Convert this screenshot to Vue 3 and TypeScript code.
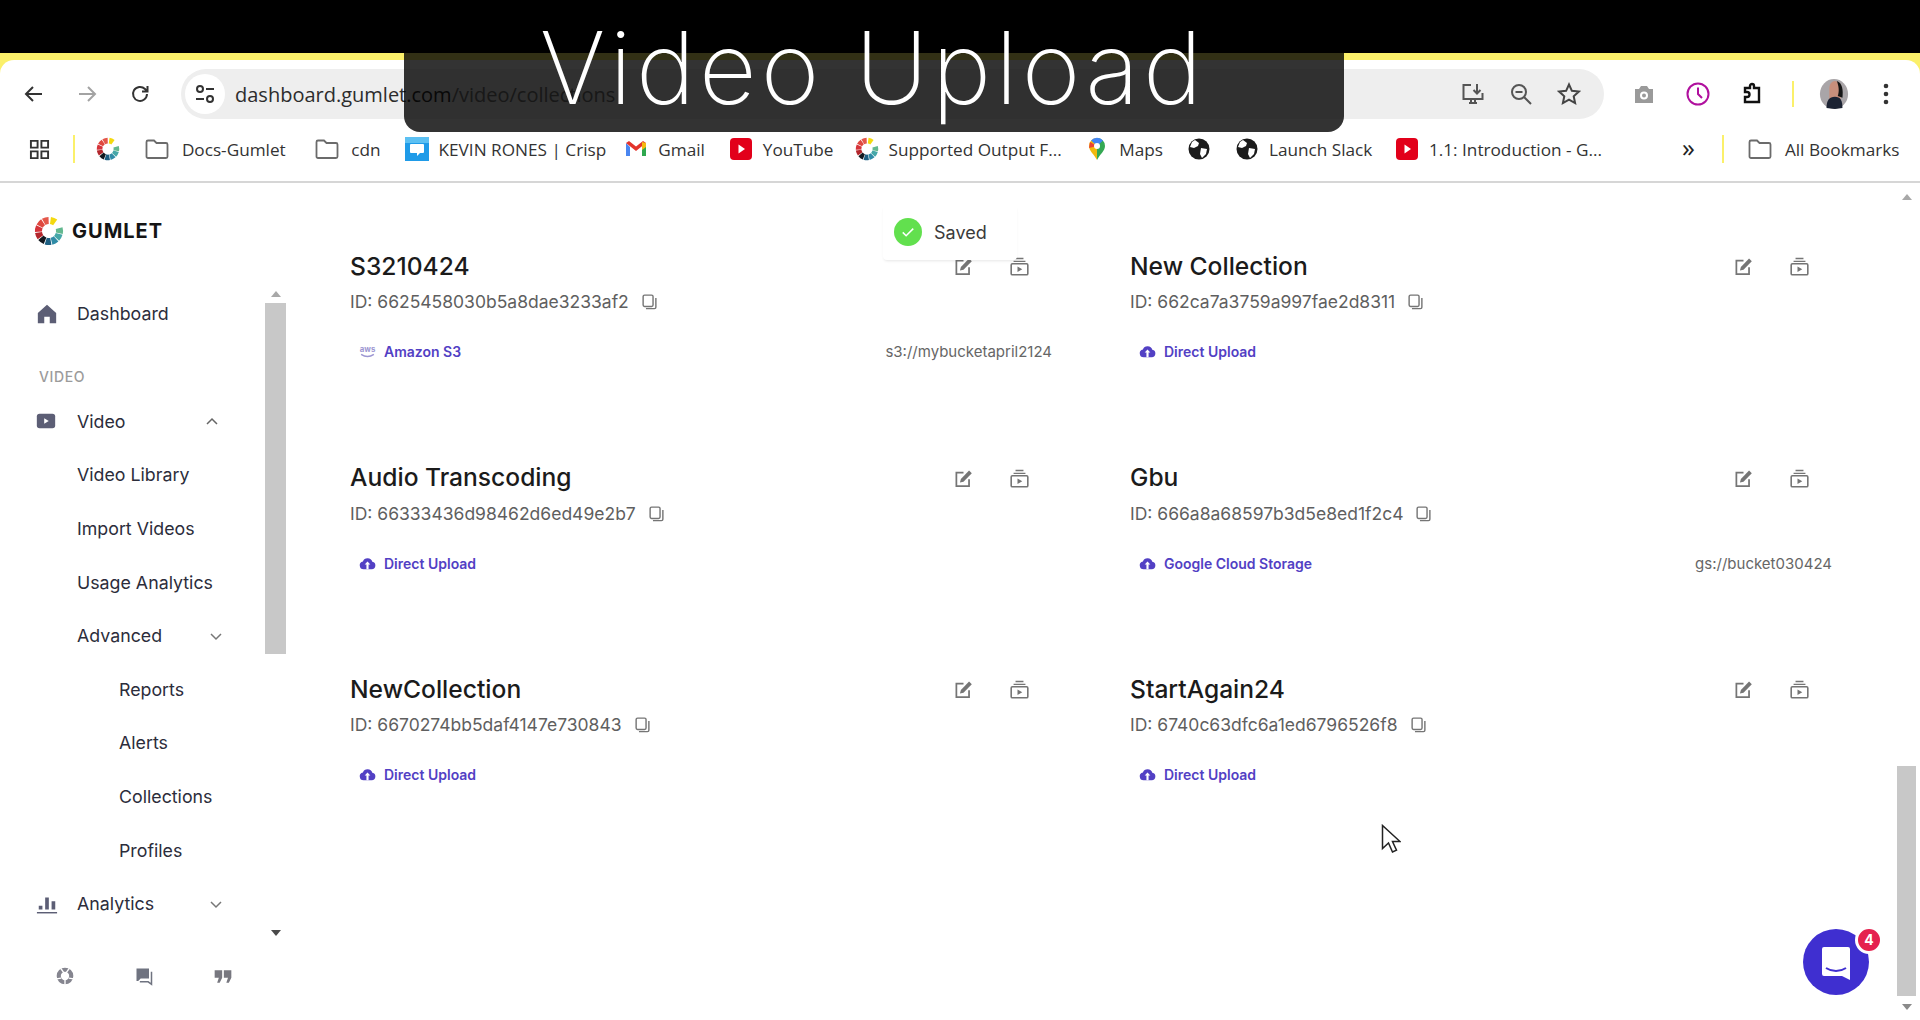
<script setup lang="ts">
interface Bookmark { label: string; icon: string; cls: string }
interface Card { name: string; id: string; source: string; icon: string; bucket?: string }

const segColors = ['#f4d90f', '#63b88f', '#45a7a8', '#2f8ba6', '#1d5f82', '#12181f', '#b3262c', '#d5333a', '#e0483f', '#e4574a']
function arc(i: number): string {
  const step = 32
  const a0 = ((8 + i * step + (i > 0 ? 34 : 0)) * Math.PI) / 180
  const a1 = a0 + ((step - 4) * Math.PI) / 180
  const p = (r: number, a: number) => `${(16 + r * Math.sin(a)).toFixed(2)} ${(16 - r * Math.cos(a)).toFixed(2)}`
  return `M${p(15, a0)} A15 15 0 0 1 ${p(15, a1)} L${p(7.5, a1)} A7.5 7.5 0 0 0 ${p(7.5, a0)} Z`
}
const logoSegments = segColors.map((color, i) => ({ color, d: arc(i) }))

const bookmarks: Bookmark[] = [
  { label: 'Docs-Gumlet', icon: 'folder', cls: 'b-docs' },
  { label: 'cdn', icon: 'folder', cls: 'b-cdn' },
  { label: 'KEVIN RONES | Crisp', icon: 'crisp', cls: 'b-crisp' },
  { label: 'Gmail', icon: 'gmail', cls: 'b-gmail' },
  { label: 'YouTube', icon: 'yt', cls: 'b-yt' },
  { label: 'Supported Output F...', icon: 'gumlet', cls: 'b-sup' },
  { label: 'Maps', icon: 'maps', cls: 'b-maps' },
  { label: '', icon: 'globe', cls: 'b-globe' },
  { label: 'Launch Slack', icon: 'globe', cls: 'b-slack' },
  { label: '1.1: Introduction - G...', icon: 'yt', cls: 'b-intro' },
]

const cards: Card[] = [
  { name: 'S3210424', id: '6625458030b5a8dae3233af2', source: 'Amazon S3', icon: 'aws', bucket: 's3://mybucketapril2124' },
  { name: 'New Collection', id: '662ca7a3759a997fae2d8311', source: 'Direct Upload', icon: 'cloud' },
  { name: 'Audio Transcoding', id: '66333436d98462d6ed49e2b7', source: 'Direct Upload', icon: 'cloud' },
  { name: 'Gbu', id: '666a8a68597b3d5e8ed1f2c4', source: 'Google Cloud Storage', icon: 'cloud', bucket: 'gs://bucket030424' },
  { name: 'NewCollection', id: '6670274bb5daf4147e730843', source: 'Direct Upload', icon: 'cloud' },
  { name: 'StartAgain24', id: '6740c63dfc6a1ed6796526f8', source: 'Direct Upload', icon: 'cloud' },
]
</script>

<template>
  <div class="page">
    <svg class="defs" aria-hidden="true">
      <symbol id="i-gumlet" viewBox="0 0 32 32">
        <path v-for="s in logoSegments" :key="s.d" :d="s.d" :fill="s.color" />
      </symbol>
      <symbol id="i-folder" viewBox="0 0 24 24">
        <path d="M1.500 5a1.500 1.500 0 0 1 1.500-1.500h6l2.500 2.500h9.500A1.500 1.500 0 0 1 22.500 7.500v12a1.500 1.500 0 0 1-1.500 1.500H3a1.500 1.500 0 0 1-1.500-1.500z" fill="none" stroke="#6b6b6b" stroke-width="1.800" />
      </symbol>
      <symbol id="i-crisp" viewBox="0 0 24 24">
        <rect width="24" height="24" fill="#1f9be8" />
        <rect y="0" width="24" height="6" fill="#5cc0f2" />
        <path d="M6 7h12a1 1 0 0 1 1 1v7a1 1 0 0 1-1 1h-3l-3 3v-3H6a1 1 0 0 1-1-1V8a1 1 0 0 1 1-1z" fill="#fff" />
      </symbol>
      <symbol id="i-gmail" viewBox="0 0 24 24">
        <path d="M2 6v13h4V10z" fill="#4a86f0" />
        <path d="M22 6v13h-4V10z" fill="#2fa84f" />
        <path d="M2 6l10 8 10-8-3-2-7 5.500L5 4z" fill="#e3342b" />
        <path d="M18 5l4 1v4l-4 3z" fill="#f5b90f" />
      </symbol>
      <symbol id="i-yt" viewBox="0 0 24 24">
        <rect x="1" y="1" width="22" height="22" rx="4" fill="#e2001a" />
        <path d="M9.500 7.500v9l6.500-4.500z" fill="#fff" />
      </symbol>
      <symbol id="i-maps" viewBox="0 0 24 24">
        <path d="M12 1a8 8 0 0 0-8 8c0 5 5 8 8 14z" fill="#f2b90c" />
        <path d="M12 1a8 8 0 0 1 8 8c0 5-5 8-8 14z" fill="#34a853" />
        <path d="M6 3.500A8 8 0 0 1 18 3.500L12 9z" fill="#4285f4" />
        <path d="M5 5l7 4-8 2z" fill="#ea4335" />
        <circle cx="12" cy="9" r="3" fill="#fff" />
      </symbol>
      <symbol id="i-globe" viewBox="0 0 24 24">
        <circle cx="12" cy="12" r="10.500" fill="#1b1b1b" />
        <path d="M8 3l4 3-1 3-4 2-4-1 2-5zM14 11l6 1-1 5-4 4-2-4z" fill="#fff" />
      </symbol>
      <symbol id="i-edit" viewBox="0 0 24 24">
        <path d="M19 13v8.500H3V4.500H12" fill="none" stroke="#757575" stroke-width="2.200" />
        <path d="M7.500 17l1.200-4.500L19 2l3.500 3.500L12 16z" fill="#757575" />
      </symbol>
      <symbol id="i-coll" viewBox="0 0 24 24">
        <path d="M7 2h10M4.500 5.500h15" fill="none" stroke="#757575" stroke-width="1.800" />
        <rect x="1.500" y="8.500" width="21" height="14" rx="1.500" fill="none" stroke="#757575" stroke-width="2" />
        <path d="M9.500 12v7l6-3.500z" fill="#757575" />
      </symbol>
      <symbol id="i-copy" viewBox="0 0 24 24">
        <rect x="3" y="3" width="14" height="16" rx="2" fill="none" stroke="#757575" stroke-width="2" />
        <path d="M21 7v13a2 2 0 0 1-2 2H7" fill="none" stroke="#757575" stroke-width="2" />
      </symbol>
      <symbol id="i-cloud" viewBox="0 0 24 24">
        <path d="M6.500 20a5.500 5.500 0 0 1-1-10.900 7 7 0 0 1 13.300 0.400A5.300 5.300 0 0 1 18 20z" fill="#5240c4" />
        <path d="M12 9l4 4.500h-2.500V20h-3v-6.500H8z" fill="#fff" />
      </symbol>
    </svg>

    <header class="chrome">
      <div class="topbar"></div>
      <div class="frame">
        <div class="frame-inner">
          <div class="toolbar">
            <div class="nav-icons">
              <svg class="tb-icon" viewBox="0 0 24 24"><path d="M20 12H5M11 5l-7 7 7 7" fill="none" stroke="#333" stroke-width="2" /></svg>
              <svg class="tb-icon" viewBox="0 0 24 24"><path d="M4 12h15M13 5l7 7-7 7" fill="none" stroke="#a3a3a3" stroke-width="2" /></svg>
              <svg class="tb-icon" viewBox="0 0 24 24"><path d="M19 12a7 7 0 1 1-2-5l2 2M19.500 4v5.500H14" fill="none" stroke="#333" stroke-width="2" /></svg>
            </div>
            <div class="omnibox">
              <span class="tune">
                <svg viewBox="0 0 24 24" width="24" height="24"><circle cx="7" cy="7" r="3" fill="none" stroke="#333" stroke-width="2" /><path d="M13 7h8M3 17h8" stroke="#333" stroke-width="2" /><circle cx="17" cy="17" r="3" fill="none" stroke="#333" stroke-width="2" /></svg>
              </span>
              <span class="url">dashboard.gumlet.com<span class="url-path">/video/collections</span></span>
              <span class="omni-right">
                <svg class="tb-icon" viewBox="0 0 24 24"><path d="M10 3H2.500v14h19v-6M16 2v9M12.500 8l3.500 3.500L19.500 8M8 21h8M10 17v4M14 17v4" fill="none" stroke="#555" stroke-width="2" /></svg>
                <svg class="tb-icon" viewBox="0 0 24 24"><circle cx="10" cy="10" r="7" fill="none" stroke="#555" stroke-width="2" /><path d="M15 15l7 7M6.500 10h7" stroke="#555" stroke-width="2" /></svg>
                <svg class="tb-icon" viewBox="0 0 24 24"><path d="M12 2.500l2.900 6.300 6.900.8-5.100 4.700 1.400 6.800L12 17.700l-6.100 3.400 1.400-6.800L2.200 9.600l6.900-.8z" fill="none" stroke="#444" stroke-width="2" /></svg>
              </span>
            </div>
            <div class="ext-icons">
              <svg class="tb-icon" viewBox="0 0 24 24"><path d="M3 7h4l2-3h6l2 3h4v14H3z" fill="#9a9a9a" /><circle cx="12" cy="13.500" r="4" fill="#fff" /><circle cx="12" cy="13.500" r="2" fill="#9a9a9a" /></svg>
              <svg class="tb-icon" viewBox="0 0 24 24"><circle cx="12" cy="12" r="10.500" fill="none" stroke="#b0109e" stroke-width="2" /><path d="M12 5.500V12l4 4" fill="none" stroke="#b0109e" stroke-width="2" /></svg>
              <svg class="tb-icon" viewBox="0 0 24 24"><path d="M5 6h5V4a2 2 0 0 1 4 0v2h5v14H5v-5h2a2.500 2.500 0 0 0 0-5H5z" fill="none" stroke="#111" stroke-width="2.400" /></svg>
              <span class="sep"></span>
              <svg class="avatar" viewBox="0 0 32 32"><ellipse cx="16" cy="16" rx="15" ry="16" fill="#a9a5a8" /><path d="M11 24V10c0-5 3-8 6-8s6 3 6 8v14z" fill="#c88f7c" /><path d="M8 31c0-8 3-12 9-12s8 4 8 12l-8 1z" fill="#1c2333" /><path d="M19 2c6 2 7 10 6 18l-5-2c2-5 1-11-1-16z" fill="#151515" /></svg>
              <svg class="dots" viewBox="0 0 6 24"><circle cx="3" cy="4" r="2.300" fill="#333" /><circle cx="3" cy="12" r="2.300" fill="#333" /><circle cx="3" cy="20" r="2.300" fill="#333" /></svg>
            </div>
          </div>
          <div class="bookmarks">
            <svg class="apps" viewBox="0 0 22 22"><path d="M2 2h7v7H2zM13 2h7v7h-7zM2 13h7v7H2zM13 13h7v7h-7z" fill="none" stroke="#333" stroke-width="2" /></svg>
            <span class="sep sep-a"></span>
            <svg class="bm-ico b-first"><use href="#i-gumlet" /></svg>
            <span v-for="b in bookmarks" :key="b.cls" class="bm" :class="[b.cls, { 'bm-folder': b.icon === 'folder' }]">
              <svg class="bm-ico"><use :href="`#i-${b.icon}`" /></svg>
              <span v-if="b.label">{{ b.label }}</span>
            </span>
            <span class="more">»</span>
            <span class="sep sep-b"></span>
            <span class="bm bm-folder b-all">
              <svg class="bm-ico"><use href="#i-folder" /></svg>
              <span>All Bookmarks</span>
            </span>
          </div>
        </div>
      </div>
    </header>

    <div class="overlay-title"><span>Video Upload</span></div>

    <div class="body-row">
      <aside class="sidebar">
        <div class="logo">
          <svg class="logo-mark"><use href="#i-gumlet" /></svg>
          <span class="logo-text">GUMLET</span>
        </div>
        <div class="side-scroll">
          <nav class="side-nav">
            <a class="item">
              <svg class="nav-ico" viewBox="0 0 24 24"><path d="M12 2l10 9v11h-7v-7H9v7H2V11z" fill="#5c5e75" /></svg>
              <span>Dashboard</span>
            </a>
            <div class="section">VIDEO</div>
            <a class="item">
              <svg class="nav-ico nav-video" viewBox="0 0 24 24"><rect x="2" y="4" width="20" height="16" rx="3" fill="#5c5e75" /><path d="M10 9v6l5-3z" fill="#fff" /></svg>
              <span>Video</span>
              <svg class="chev chev-up" viewBox="0 0 12 8"><path d="M1 7l5-5 5 5" fill="none" stroke="#666" stroke-width="1.500" /></svg>
            </a>
            <a class="item sub">Video Library</a>
            <a class="item sub">Import Videos</a>
            <a class="item sub">Usage Analytics</a>
            <a class="item sub">Advanced
              <svg class="chev" viewBox="0 0 12 8"><path d="M1 1l5 5 5-5" fill="none" stroke="#777" stroke-width="1.500" /></svg>
            </a>
            <a class="item subsub">Reports</a>
            <a class="item subsub">Alerts</a>
            <a class="item subsub">Collections</a>
            <a class="item subsub">Profiles</a>
            <a class="item">
              <svg class="nav-ico" viewBox="0 0 24 24"><path d="M3 14h4v4H3zM10 5h4v13h-4zM17 9h4v9h-4z" fill="#5c5e75" /><path d="M1 21.500h22" stroke="#5c5e75" stroke-width="1.600" /></svg>
              <span>Analytics</span>
              <svg class="chev" viewBox="0 0 12 8"><path d="M1 1l5 5 5-5" fill="none" stroke="#777" stroke-width="1.500" /></svg>
            </a>
          </nav>
          <div class="side-bar">
            <i class="tri-up"></i>
            <i class="side-thumb"></i>
            <i class="tri-down"></i>
          </div>
        </div>
        <div class="side-foot">
          <svg viewBox="0 0 24 24"><circle cx="12" cy="12" r="10" fill="#85858f" /><circle cx="12" cy="12" r="5" fill="#fff" /><path d="M7 3l3.500 5M17 3l-3.500 5M1.500 15.500l6-1M22.500 15.500l-6-1M12 16.500V23" stroke="#fff" stroke-width="1.600" /></svg>
          <svg viewBox="0 0 24 24"><path d="M3 3h15v12H8l-3 3H3z" fill="#6f7380" /><path d="M21 7v15l-4-3H7" fill="none" stroke="#6f7380" stroke-width="1.800" /></svg>
          <svg viewBox="0 0 24 24"><path d="M2 5h9v9l-3 6H5l2-6H2zM13 5h9v9l-3 6h-3l2-6h-5z" fill="#77777f" /></svg>
        </div>
      </aside>

      <main class="content">
        <section class="grid">
          <article v-for="c in cards" :key="c.id" class="card">
            <div class="card-head">
              <h3>{{ c.name }}</h3>
              <span class="card-actions">
                <svg><use href="#i-edit" /></svg>
                <svg><use href="#i-coll" /></svg>
              </span>
            </div>
            <div class="card-id">
              <span>ID: {{ c.id }}</span>
              <svg><use href="#i-copy" /></svg>
            </div>
            <div class="card-source">
              <span class="src">
                <svg v-if="c.icon === 'aws'" viewBox="0 0 24 24">
                  <text x="12" y="13" text-anchor="middle" font-family="Inter, sans-serif" font-size="11" font-weight="700" fill="#9c96d2">aws</text>
                  <path d="M3 16c6 4 12 4 18 0" fill="none" stroke="#9c96d2" stroke-width="2" />
                </svg>
                <svg v-else><use href="#i-cloud" /></svg>
                {{ c.source }}
              </span>
              <span v-if="c.bucket" class="bucket">{{ c.bucket }}</span>
            </div>
          </article>
        </section>
      </main>

      <div class="page-bar">
        <i class="tri-up"></i>
        <i class="page-thumb"></i>
        <i class="tri-down"></i>
      </div>
    </div>

    <div class="toast">
      <span class="toast-check">
        <svg viewBox="0 0 24 24" width="18" height="18"><path d="M5 12.500l4.500 4.500L19 7.500" fill="none" stroke="#fff" stroke-width="2" /></svg>
      </span>
      <span>Saved</span>
    </div>

    <div class="chat">
      <svg viewBox="0 0 30 36" width="30" height="36"><path d="M3 1h24a2 2 0 0 1 2 2v31l-8-4H3a2 2 0 0 1-2-2V3a2 2 0 0 1 2-2z" fill="#fff" /><path d="M5 22c6 4 14 4 20 0" fill="none" stroke="#3f2fd0" stroke-width="2" /></svg>
      <span class="badge">4</span>
    </div>

    <svg class="cursor" viewBox="0 0 20 30" width="20" height="30"><path d="M1.500 1.500v23l6-5.500 4 9 4-1.800-4-8.700h7.500z" fill="#fff" stroke="#222" stroke-width="1.500" /></svg>
  </div>
</template>

<style scoped>
.page {
  position: relative;
  width: 1920px;
  height: 1020px;
  overflow: hidden;
  display: flex;
  flex-direction: column;
  background: #fff;
  font-family: Inter, "Liberation Sans", sans-serif;
  color: #222;
}
.defs { position: absolute; width: 0; height: 0; }

/* browser chrome */
.chrome { flex: none; height: 183px; display: flex; flex-direction: column; border-bottom: 2px solid #d6d6d6; box-sizing: border-box; }
.topbar { flex: none; height: 53px; background: #000; }
.frame { flex: 1; min-height: 0; background: #fbf06a; padding-top: 7px; display: flex; }
.frame-inner { flex: 1; background: #fff; border-radius: 14px 14px 0 0; display: flex; flex-direction: column; }
.toolbar { flex: none; height: 68px; display: flex; align-items: center; box-sizing: border-box; }
.tb-icon { width: 24px; height: 24px; flex: none; }
.nav-icons { width: 181px; box-sizing: border-box; padding-left: 22px; display: flex; gap: 29px; }
.omnibox { width: 1423px; height: 50px; border-radius: 25px; background: #eeeeee; display: flex; align-items: center; padding: 0 0 0 4px; box-sizing: border-box; }
.tune { width: 40px; height: 40px; border-radius: 50%; background: #fff; display: flex; align-items: center; justify-content: center; }
.url { margin-left: 10px; font: 20px "Open Sans", sans-serif; color: #2c2c2c; flex: 1; }
.url-path { color: #777; }
.omni-right { display: flex; gap: 24px; padding-right: 23px; }
.ext-icons { flex: 1; display: flex; align-items: center; padding-left: 28px; gap: 30px; }
.ext-icons .sep { height: 26px; margin: 0 7px 0 -2px; }
.sep { display: inline-block; width: 2px; height: 28px; background: #fbf06a; flex: none; }
.avatar { width: 30px; height: 32px; flex: none; margin-left: -12px; }
.dots { width: 6px; height: 24px; flex: none; margin-left: 4px; }

.bookmarks { flex: 1; display: flex; align-items: center; font: 17.200px "Open Sans", sans-serif; color: #333; padding-left: 29px; padding-bottom: 11px; box-sizing: border-box; white-space: nowrap; }
.apps { width: 21px; height: 21px; flex: none; }
.sep-a { margin-left: 23px; }
.bm { display: inline-flex; align-items: center; gap: 10px; }
.bm-folder { gap: 12.500px; }
.bm-ico { width: 24px; height: 24px; flex: none; }
.b-first { margin-left: 21px; }
.b-docs { margin-left: 25.400px; }
.b-cdn { margin-left: 29px; }
.b-crisp { margin-left: 24px; }
.b-gmail { margin-left: 18px; }
.b-yt { margin-left: 24px; }
.b-sup { margin-left: 21px; }
.b-maps { margin-left: 23.500px; }
.b-globe { margin-left: 24px; }
.b-slack { margin-left: 24px; }
.b-intro { margin-left: 22.500px; }
.more { margin-left: 80px; font-size: 26px; line-height: 24px; padding-bottom: 4px; color: #222; }
.sep-b { margin-left: 27.500px; }
.b-all { margin-left: 24px; }

/* caption over the recording */
.overlay-title {
  position: absolute;
  left: 404px;
  top: 0;
  width: 940px;
  height: 132px;
  background: rgba(0, 0, 0, 0.8);
  border-radius: 0 0 16px 16px;
  display: flex;
  align-items: center;
  justify-content: center;
  color: #fff;
  font: 200 100px/1 Inter, sans-serif;
  letter-spacing: 4px;
  z-index: 5;
}
.overlay-title span { transform: translate(-1px, 2px); }

.body-row { flex: 1; min-height: 0; display: flex; }

/* sidebar */
.sidebar { flex: none; width: 290px; display: flex; flex-direction: column; }
.logo { flex: none; height: 104px; box-sizing: border-box; padding: 33px 0 0 34px; display: flex; align-items: flex-start; gap: 8px; }
.logo-mark { width: 30px; height: 30px; flex: none; }
.logo-text { font: 700 20px/30px Inter, sans-serif; letter-spacing: 1px; color: #141414; }
.side-scroll { flex: 1; min-height: 0; display: flex; }
.side-nav { width: 265px; flex: none; font-size: 17.800px; color: #2c2d3b; box-sizing: border-box; }
.item { height: 53.600px; display: flex; align-items: center; padding-left: 77px; position: relative; box-sizing: border-box; }
.nav-ico { position: absolute; left: 36px; top: 50%; width: 22px; height: 22px; margin-top: -11px; }
.nav-video { left: 35px; }
.chev { position: absolute; left: 210px; top: 50%; width: 12px; height: 8px; margin-top: -3px; }
.chev-up { left: 206px; margin-top: -4px; }
.subsub { padding-left: 119px; }
.section { height: 20px; margin: 26px 0 8px; padding-left: 39px; font-size: 14px; line-height: 20px; letter-spacing: .6px; color: #9b9b9b; font-weight: 500; }
.side-bar { width: 21px; flex: none; display: flex; flex-direction: column; align-items: center; height: 660px; }
.side-bar .tri-up { margin: 4px 0 6px; }
.side-thumb { display: block; width: 21px; height: 351px; background: #c8c8c8; flex: none; }
.side-bar .tri-down { margin-top: auto; margin-bottom: 11px; border-top-color: #4a4a4a; }
.tri-up { display: block; width: 0; height: 0; border-left: 5px solid transparent; border-right: 5px solid transparent; border-bottom: 6px solid #a8a8a8; flex: none; }
.tri-down { display: block; width: 0; height: 0; border-left: 5px solid transparent; border-right: 5px solid transparent; border-top: 6px solid #8a8a8a; flex: none; }
.side-foot { flex: none; height: 70px; display: flex; padding: 2px 0 0 55px; box-sizing: border-box; gap: 59px; }
.side-foot svg { width: 20px; height: 20px; flex: none; margin-top: 14px; }

/* collections */
.content { flex: 1; min-width: 0; padding: 67.500px 0 0 60px; }
.grid { display: grid; grid-template-columns: 702px 702px; column-gap: 78px; grid-auto-rows: 211.500px; }
.card-head { display: flex; align-items: center; justify-content: space-between; height: 30px; }
.card-head h3 { margin: 0; font-size: 24.600px; font-weight: 500; line-height: 30px; color: #1b1b1b; }
.card-actions { display: flex; gap: 37px; padding: 2px 23px 0 0; }
.card-actions svg { width: 19px; height: 19px; flex: none; }
.card-id { display: flex; align-items: center; gap: 12px; margin-top: 8px; height: 26px; font-size: 17.500px; color: #5f5f5f; }
.card-id svg { width: 17px; height: 17px; flex: none; }
.card-source { display: flex; justify-content: space-between; align-items: center; margin-top: 27px; height: 20px; padding-left: 9px; }
.src { display: flex; align-items: center; gap: 8px; font-size: 14px; font-weight: 600; color: #5240c4; }
.src svg { width: 17px; height: 17px; flex: none; }
.bucket { font-size: 15px; color: #666; }

.page-bar { flex: none; width: 19px; margin-right: 4px; display: flex; flex-direction: column; align-items: center; }
.page-bar .tri-up { margin-top: 11px; }
.page-thumb { display: block; width: 19px; height: 230px; background: #c8c8c8; margin-top: 566px; flex: none; }
.page-bar .tri-down { margin-top: 8px; }

.toast { position: absolute; left: 883px; top: 205px; width: 134px; height: 55px; display: flex; align-items: center; gap: 12px; padding: 0 0 1px 11px; box-sizing: border-box; background: #fff; border-radius: 4px; box-shadow: 0 2px 3px -1px rgba(0, 0, 0, .1); font: 18px Inter, sans-serif; color: #3b3b3b; z-index: 0; }
.toast-check { width: 28px; height: 28px; border-radius: 50%; background: #62e04e; display: flex; align-items: center; justify-content: center; flex: none; }

.chat { position: absolute; left: 1803px; top: 929px; width: 66px; height: 66px; border-radius: 50%; background: #3f2fd0; display: flex; align-items: center; justify-content: center; padding-top: 3px; box-sizing: border-box; }
.badge { position: absolute; left: 52px; top: -3px; width: 22px; height: 22px; border-radius: 50%; border: 3px solid #fff; background: #e5214f; color: #fff; font: 700 14px/22px Inter, sans-serif; text-align: center; }

.cursor { position: absolute; left: 1381px; top: 824px; z-index: 6; }
</style>
